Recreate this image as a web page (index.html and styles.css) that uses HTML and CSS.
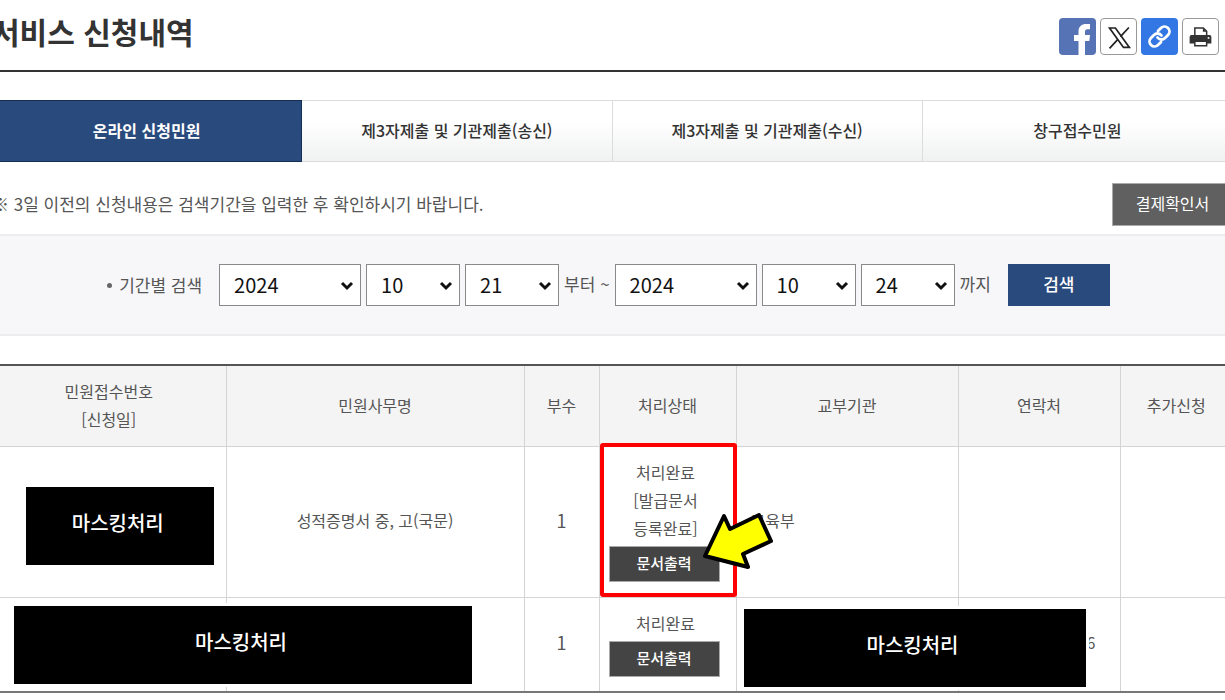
FILE: index.html
```html
<!DOCTYPE html>
<html lang="ko">
<head>
<meta charset="utf-8">
<meta name="viewport" content="width=device-width, initial-scale=1">
<title>서비스 신청내역</title>
<link rel="stylesheet" href="styles.css">
</head>
<body>
<main class="page">
  <header class="page-head">
    <h1 class="page-title">서비스 신청내역</h1>
    <div class="share">
      <button class="share-btn share-facebook" type="button" aria-label="페이스북 공유">
        <svg viewBox="0 0 37 37"><path fill="#fff" d="M19.500 37V23H15v-6h4.500v-3.500C19.500 8.500 22.500 6 27.300 6H31v5.300h-2.500c-2 0-2.500.9-2.500 2.500V17h5l-.7 6H26v14z"/></svg>
      </button>
      <button class="share-btn share-outline" type="button" aria-label="X 공유">
        <svg viewBox="0 0 37 37"><path fill="#fff" stroke="#222" stroke-width="1.800" d="M9 9.500h6.200L30 30h-6.200z"/><path fill="none" stroke="#222" stroke-width="1.800" d="M29.500 9 20.500 18.600M17.600 21.800 9 31"/></svg>
      </button>
      <button class="share-btn share-link" type="button" aria-label="링크 복사">
        <svg viewBox="0 0 37 37"><g transform="translate(6.500 6.500)" fill="none" stroke="#fff" stroke-width="2.800" stroke-linecap="round"><path d="M10 13a5 5 0 0 0 7.540.54l3-3a5 5 0 0 0-7.070-7.070l-3 3"/><path d="M14 11a5 5 0 0 0-7.540-.54l-3 3a5 5 0 0 0 7.070 7.070l3-3"/></g></svg>
      </button>
      <button class="share-btn share-outline" type="button" aria-label="인쇄">
        <svg viewBox="0 0 37 37"><path fill="#fff" stroke="#333" stroke-width="1.600" d="M12.500 18V9.500h9l3.500 3.500v5"/><path fill="#333" d="M21 9.500v4h4zM9 17h19a2 2 0 0 1 2 2v7H7v-7a2 2 0 0 1 2-2z"/><path fill="#fff" stroke="#333" stroke-width="1.600" d="M12.500 23.500H25v4.700H12.500z"/><circle cx="27" cy="20" r="1" fill="#fff"/></svg>
      </button>
    </div>
  </header>

  <nav class="tabs">
    <a class="tab tab-active" href="#">온라인 신청민원</a>
    <a class="tab" href="#">제3자제출 및 기관제출(송신)</a>
    <a class="tab" href="#">제3자제출 및 기관제출(수신)</a>
    <a class="tab" href="#">창구접수민원</a>
  </nav>

  <div class="notice">
    <p class="notice-text">※ 3일 이전의 신청내용은 검색기간을 입력한 후 확인하시기 바랍니다.</p>
    <button class="receipt-btn" type="button">결제확인서</button>
  </div>

  <form class="search">
    <label class="search-label" for="from-year">기간별 검색</label>
    <div class="date-group">
      <span class="select select-year"><select id="from-year"><option>2024</option></select><svg viewBox="0 0 14 10"><path d="m2 2 5 5 5-5"/></svg></span>
      <span class="select"><select aria-label="시작 월"><option>10</option></select><svg viewBox="0 0 14 10"><path d="m2 2 5 5 5-5"/></svg></span>
      <span class="select"><select aria-label="시작 일"><option>21</option></select><svg viewBox="0 0 14 10"><path d="m2 2 5 5 5-5"/></svg></span>
      <span class="range-word">부터 ~</span>
      <span class="select select-year"><select aria-label="종료 연도"><option>2024</option></select><svg viewBox="0 0 14 10"><path d="m2 2 5 5 5-5"/></svg></span>
      <span class="select"><select aria-label="종료 월"><option>10</option></select><svg viewBox="0 0 14 10"><path d="m2 2 5 5 5-5"/></svg></span>
      <span class="select"><select aria-label="종료 일"><option>24</option></select><svg viewBox="0 0 14 10"><path d="m2 2 5 5 5-5"/></svg></span>
      <span class="range-word">까지</span>
    </div>
    <button class="search-btn" type="button">검색</button>
  </form>

  <table class="list">
    <colgroup>
      <col class="col-number"><col class="col-name"><col class="col-count"><col class="col-status"><col class="col-agency"><col class="col-phone"><col>
    </colgroup>
    <thead>
      <tr>
        <th scope="col">민원접수번호<br>[신청일]</th>
        <th scope="col">민원사무명</th>
        <th scope="col">부수</th>
        <th scope="col">처리상태</th>
        <th scope="col">교부기관</th>
        <th scope="col">연락처</th>
        <th scope="col">추가신청</th>
      </tr>
    </thead>
    <tbody>
      <tr class="row-tall">
        <td class="cell-mask"><div class="mask">마스킹처리</div></td>
        <td>성적증명서 중, 고(국문)</td>
        <td class="count">1</td>
        <td class="status">
          <p class="status-text">처리완료<br>[발급문서<br>등록완료]</p>
          <button class="print-btn" type="button">문서출력</button>
          <div class="highlight"></div>
          <svg class="pointer" viewBox="0 0 72 60"><path d="M3 44 22 4 28 17 57 3 69 29 41 42 46 55z"/></svg>
        </td>
        <td class="agency">교육부</td>
        <td></td>
        <td></td>
      </tr>
      <tr class="row-short">
        <td class="anchor"><div class="mask mask-over mask-left">마스킹처리</div></td>
        <td></td>
        <td class="count">1</td>
        <td class="status">
          <p class="status-text">처리완료</p>
          <button class="print-btn" type="button">문서출력</button>
        </td>
        <td class="anchor"><div class="mask mask-over mask-right">마스킹처리</div></td>
        <td class="phone">6</td>
        <td></td>
      </tr>
    </tbody>
  </table>
</main>
</body>
</html>
```
FILE: styles.css
```css
* {
  box-sizing: border-box;
}

body {
  margin: 0;
  overflow: hidden;
  background: #fff;
  color: #555;
  font: 17px/28px "Noto Sans CJK KR", sans-serif;
}

h1,
p {
  margin: 0;
}

button,
select {
  font-family: inherit;
}

.page {
  margin: 0 -8px;
}

.page-head {
  display: flex;
  justify-content: space-between;
  align-items: center;
  height: 72px;
  padding: 2px 14px 0 0;
  border-bottom: 2px solid #333;
}

.page-title {
  padding-bottom: 10px;
  color: #333;
  font-size: 30px;
  font-weight: 700;
  line-height: 40px;
}

.share {
  display: flex;
  gap: 4px;
}

.share-btn {
  width: 37px;
  height: 37px;
  padding: 0;
  border: 0;
  border-radius: 4px;
  overflow: hidden;
}

.share-btn svg {
  display: block;
  width: 100%;
  height: 100%;
}

.share-facebook {
  background: #5673b5;
}

.share-link {
  background: #3277e3;
}

.share-outline {
  border: 1px solid #999;
  background: #fff;
}

.tabs {
  display: grid;
  grid-template-columns: repeat(4, 1fr);
  margin-top: 28px;
}

.tab {
  display: flex;
  align-items: center;
  justify-content: center;
  height: 62px;
  padding-bottom: 2px;
  border: 1px solid #dcdcdc;
  border-left: 0;
  background: linear-gradient(#fff 35%, #f0f1f1);
  color: #333;
  font-size: 16px;
  font-weight: 500;
  text-decoration: none;
}

.tab-active {
  border-color: #152f54;
  background: #294a7d;
  color: #fff;
  font-weight: 700;
}

.notice {
  display: flex;
  justify-content: space-between;
  align-items: center;
  margin: 21px 0 8px;
}

.notice-text {
  padding-bottom: 2px;
}

.receipt-btn {
  width: 121px;
  height: 43px;
  padding-bottom: 4px;
  border: 1px solid #aaa;
  background: #606060;
  color: #fff;
  font-size: 16px;
}

.search {
  display: flex;
  align-items: center;
  justify-content: center;
  height: 102px;
  padding-right: 8px;
  border: solid #ededf0;
  border-width: 2px 0;
  background: #f7f7fa;
}

.search-label {
  display: flex;
  align-items: center;
  gap: 7px;
  margin-right: 17px;
}

.search-label::before {
  width: 5px;
  height: 5px;
  border-radius: 50%;
  background: #666;
  content: "";
}

.date-group {
  display: flex;
  align-items: center;
  gap: 5px;
}

.range-word {
  padding-bottom: 2px;
}

.select {
  position: relative;
  width: 94px;
}

.select-year {
  width: 142px;
}

.select select {
  display: block;
  width: 100%;
  height: 42px;
  padding: 0 14px 2px;
  border: 1px solid #8a8a8a;
  border-radius: 0;
  appearance: none;
  background: #fff;
  color: #111;
  font-size: 20px;
}

.select svg {
  position: absolute;
  top: 17px;
  right: 7px;
  width: 14px;
  height: 10px;
  fill: none;
  stroke: #111;
  stroke-width: 3;
  pointer-events: none;
}

.search-btn {
  width: 102px;
  height: 42px;
  margin-left: 17px;
  padding-bottom: 4px;
  border: 0;
  background: #294a7d;
  color: #fff;
  font-size: 17px;
  font-weight: 500;
}

.list {
  width: 100%;
  margin-top: 28px;
  border-collapse: collapse;
  border-top: 2px solid #555;
  border-bottom: 2px solid #777;
  table-layout: fixed;
  font-size: 16px;
}

.col-number {
  width: 234px;
}

.col-name {
  width: 298px;
}

.col-count {
  width: 75px;
}

.col-status {
  width: 137px;
}

.col-agency {
  width: 222px;
}

.col-phone {
  width: 162px;
}

.list th,
.list td {
  padding: 0 0 4px;
  border-right: 1px solid #d4d4d4;
  text-align: center;
}

.list th {
  height: 81px;
  padding-bottom: 2px;
  border-bottom: 1px solid #d4d4d4;
  background: #f4f4f4;
  font-weight: 400;
}

.row-tall {
  height: 151px;
  border-bottom: 1px solid #d4d4d4;
}

.row-short {
  height: 95px;
}

.list .count {
  font-size: 18px;
}

.list .cell-mask {
  padding: 8px 12px 0 34px;
}

.list .status {
  position: relative;
  padding: 0 13px 3px 9px;
}

.print-btn {
  display: block;
  width: 111px;
  height: 36px;
  margin-top: 4px;
  padding-bottom: 4px;
  border: 1px solid #aaa;
  background: #444;
  color: #fff;
  font-size: 15px;
  font-weight: 500;
}

.list .agency {
  padding-left: 14px;
  text-align: left;
}

.list .phone {
  padding-right: 24px;
  text-align: right;
}

.anchor {
  position: relative;
}

.mask {
  display: flex;
  align-items: center;
  justify-content: center;
  height: 78px;
  padding: 0 4px 6px 0;
  background: #000;
  color: #fff;
  font-size: 20px;
  font-weight: 500;
}

.mask-over {
  position: absolute;
  box-shadow: 0 0 0 3px #fff;
}

.mask-left {
  top: 8px;
  left: 22px;
  width: 458px;
}

.mask-right {
  top: 11px;
  left: 7px;
  z-index: 1;
  width: 342px;
}

.highlight {
  position: absolute;
  inset: -4px -1px 0 0;
  border: 4px solid #f00;
  border-radius: 3px;
  pointer-events: none;
}

.pointer {
  position: absolute;
  top: 65px;
  left: 102px;
  z-index: 2;
  width: 72px;
  height: 60px;
  fill: #ff0;
  stroke: #000;
  stroke-width: 4;
  stroke-linejoin: round;
  pointer-events: none;
}
```
